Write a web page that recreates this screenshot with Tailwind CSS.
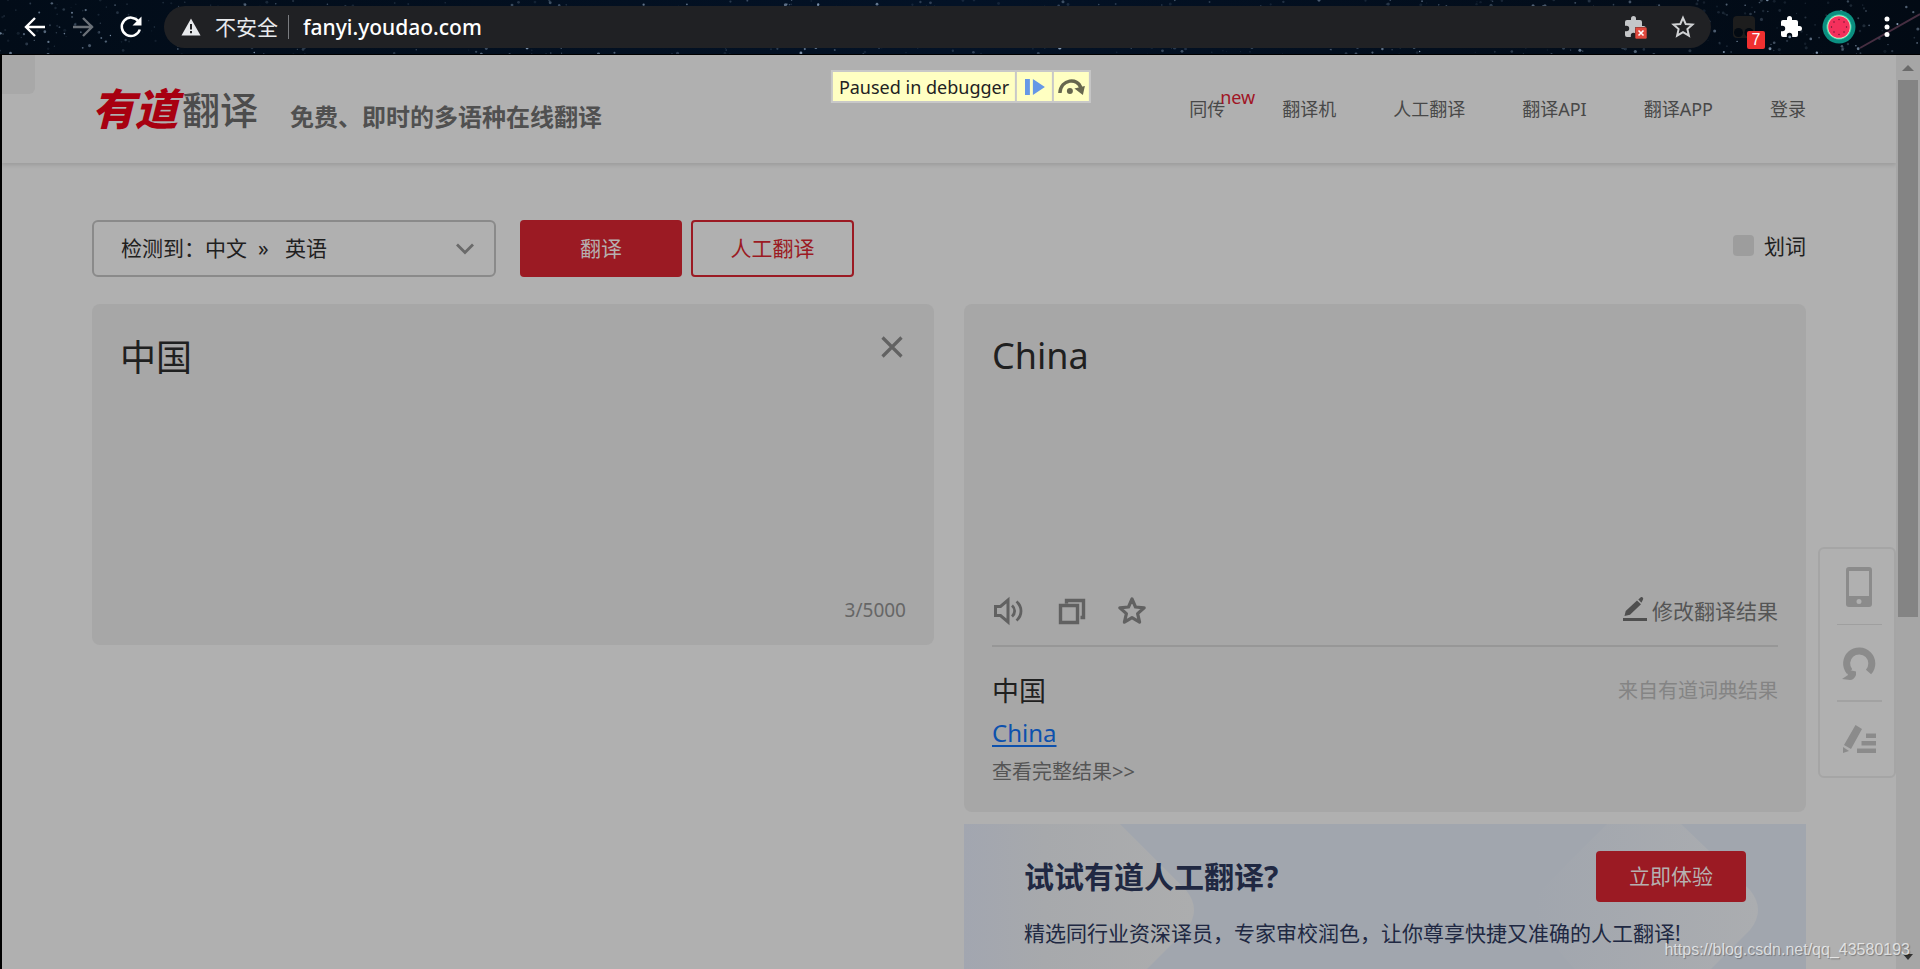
<!DOCTYPE html>
<html lang="zh-CN">
<head>
<meta charset="utf-8">
<title>有道翻译</title>
<script src="https://cdn.jsdelivr.net/npm/@tailwindcss/browser@4"></script>
</head>
<body class="h-screen overflow-hidden flex flex-col bg-black font-['Noto_Sans','Noto_Sans_CJK_SC',sans-serif] text-[#1f2020]">

<!-- Browser toolbar -->
<div class="relative h-[55px] shrink-0 bg-linear-to-r from-[#020c18] via-[#031226] to-[#020a14] border-b border-black">
  <svg id="sky" class="absolute inset-0 w-full h-full" aria-hidden="true"></svg>
  <div class="relative h-full flex items-center pt-[6px] pb-[6px] pl-[23px] pr-[21px]">
    <button aria-label="后退" class="w-6 h-6 text-white"><svg viewBox="0 0 24 24" fill="none" stroke="currentColor" stroke-width="2.4"><path d="M22 12H3.5M12 3l-9 9 9 9"/></svg></button>
    <button aria-label="前进" class="w-6 h-6 ml-6 text-[#6b7178]"><svg viewBox="0 0 24 24" fill="none" stroke="currentColor" stroke-width="2.4"><path d="M2 12h18.500M12 3l9 9-9 9"/></svg></button>
    <button aria-label="重新加载" class="w-6 h-6 ml-6 text-white"><svg viewBox="0 0 24 24"><path d="M19.500 6.500A9.200 9.200 0 1 0 20.800 14.500" fill="none" stroke="currentColor" stroke-width="2.500"/><path d="M22.500 1.500v9h-9z" fill="currentColor"/></svg></button>
    <div class="flex-1 ml-[21px] h-[42px] rounded-full bg-[#202124] flex items-center pl-[17px] pr-4 text-[#e8eaed]">
      <svg class="w-5 h-5" viewBox="0 0 20 20"><path d="M10 1.500L19.500 18.500H.5z" fill="#e8eaed"/><path d="M10 7v5.500M10 14v2.200" stroke="#202124" stroke-width="2"/></svg>
      <span class="ml-[14px] text-[21px] leading-7">不安全</span>
      <span class="w-px h-6 bg-[#7a7c80] ml-[10px]"></span>
      <input id="url" aria-label="地址" type="text" value="fanyi.youdao.com" class="ml-[14px] flex-1 h-8 bg-transparent text-white text-[21px] leading-8 font-medium outline-none">
      <button aria-label="扩展已停用" class="relative w-6 h-6">
        <svg viewBox="0 0 24 24" fill="#c4c6c8"><path d="M20.500 11H19V7a2 2 0 0 0-2-2h-4V3.500a2.500 2.500 0 0 0-5 0V5H4a2 2 0 0 0-2 2v3.800h1.500a2.700 2.700 0 0 1 0 5.400H2V20a2 2 0 0 0 2 2h3.800v-1.500a2.700 2.700 0 0 1 5.400 0V22H17a2 2 0 0 0 2-2v-4h1.500a2.500 2.500 0 0 0 0-5z"/></svg>
        <svg class="absolute left-3 top-3 w-3 h-3" viewBox="0 0 12 12"><rect width="12" height="12" rx="1.500" fill="#e0493e" stroke="#202124" stroke-width=".6"/><path d="M3.500 3.500l5 5m0-5l-5 5" stroke="#fff" stroke-width="1.600"/></svg>
      </button>
      <button aria-label="收藏" class="w-6 h-6 ml-6"><svg viewBox="0 0 24 24" fill="none" stroke="#d0d2d4" stroke-width="2"><path d="M12 2.800l2.700 6.200 6.800.6-5.100 4.500 1.500 6.600-5.900-3.500-5.900 3.500 1.500-6.600L2.500 9.600l6.800-.6z"/></svg></button>
    </div>
    <button aria-label="脚本扩展" class="relative w-8 h-8 ml-[21px]">
      <svg viewBox="0 0 32 32"><rect x="1" y="5" width="22" height="22" rx="4" fill="#1d1d1d"/><circle cx="6.500" cy="21.500" r="4.500" fill="#030a12"/><circle cx="17" cy="21.500" r="4.500" fill="#030a12"/></svg>
      <span class="absolute left-[15px] top-[20px] w-[18px] h-[18px] rounded-xs bg-[#f03030] text-white text-base leading-[18px] text-center font-['Liberation_Sans',sans-serif]">7</span>
    </button>
    <button aria-label="扩展程序" class="w-6 h-6 ml-[15px]"><svg viewBox="0 0 24 24" fill="#fff"><path d="M20.500 11H19V7a2 2 0 0 0-2-2h-4V3.500a2.500 2.500 0 0 0-5 0V5H4a2 2 0 0 0-2 2v3.800h1.500a2.700 2.700 0 0 1 0 5.400H2V20a2 2 0 0 0 2 2h3.800v-1.500a2.700 2.700 0 0 1 5.400 0V22H17a2 2 0 0 0 2-2v-4h1.500a2.500 2.500 0 0 0 0-5z"/></svg></button>
    <button aria-label="用户" class="w-[34px] h-[34px] ml-[19px]"><svg viewBox="0 0 34 34"><circle cx="17" cy="17" r="16.500" fill="#0b8f80"/><circle cx="17" cy="17" r="12.500" fill="#3fdcb0"/><circle cx="17" cy="17" r="11.500" fill="#f7e3c8"/><circle cx="17" cy="17" r="10.800" fill="#f4305c"/><g fill="#5a1530"><circle cx="17" cy="9.500" r=".7"/><circle cx="17" cy="24.500" r=".7"/><circle cx="9.500" cy="17" r=".7"/><circle cx="24.500" cy="17" r=".7"/><circle cx="12" cy="12" r=".7"/><circle cx="22" cy="12" r=".7"/><circle cx="12" cy="22" r=".7"/><circle cx="22" cy="22" r=".7"/></g></svg></button>
    <button aria-label="菜单" class="w-6 h-6 ml-[19px]"><svg viewBox="0 0 24 24" fill="#fff"><circle cx="12" cy="4" r="2.500"/><circle cx="12" cy="12" r="2.500"/><circle cx="12" cy="19.500" r="2.500"/></svg></button>
  </div>
</div>

<!-- Viewport: page and scrollbar -->
<div class="relative flex-1 min-h-0 flex border-l-2 border-black bg-[#b0b0b0]">
  <div class="relative flex-1 min-w-0 overflow-hidden">
    <div class="absolute left-0 top-0 w-[33px] h-[39px] bg-[#a8a8a8] rounded-br-md"></div>

    <header class="relative h-[108px] px-[90px] flex items-center justify-between shadow-[0_2px_4px_rgba(0,0,0,0.12)]">
      <div class="flex items-center">
        <a href="#" class="flex items-center gap-1 leading-[48px]" aria-label="有道翻译"><span class="text-[43px] font-black italic text-[#a80010]">有道</span><span class="text-[38px] font-medium text-[#4c4c4c]">翻译</span></a>
        <p class="ml-8 mt-4 text-2xl font-bold text-[#505050]">免费、即时的多语种在线翻译</p>
      </div>
      <nav class="flex gap-[57px] text-lg leading-6 text-[#484848]">
        <a href="#" class="relative">同传<span class="absolute left-[31px] top-[-12px] text-[#a01525]">new</span></a>
        <a href="#">翻译机</a>
        <a href="#">人工翻译</a>
        <a href="#">翻译API</a>
        <a href="#">翻译APP</a>
        <a href="#">登录</a>
      </nav>
    </header>

    <main class="px-[90px] pt-[57px]">
      <div class="flex items-center">
        <div class="relative w-[404px]">
          <select id="lang" aria-label="语言" class="appearance-none w-full h-[57px] rounded-md border-2 border-[#8a8a8a] bg-transparent pl-[27px] text-[21px]"><option>检测到：中文&nbsp;&nbsp;»&nbsp;&nbsp;&nbsp;英语</option></select>
          <svg class="absolute right-[21px] top-[23px] w-5 h-3 pointer-events-none" viewBox="0 0 20 12" fill="none" stroke="#6a6a6a" stroke-width="2.800"><path d="M2 1.500l8 8 8-8"/></svg>
        </div>
        <button class="ml-6 w-[162px] h-[57px] rounded-sm bg-[#9b1a23] text-[#b6b0b0] text-[21px]">翻译</button>
        <button class="ml-[9px] w-[163px] h-[57px] rounded-sm border-2 border-[#9b1a23] text-[#9b1a23] text-[21px]">人工翻译</button>
        <label class="ml-auto flex items-center gap-[10px] text-[21px] leading-7 pb-[6px]"><input type="checkbox" class="appearance-none w-[21px] h-[21px] rounded-sm bg-[#9d9d9d]">划词</label>
      </div>

      <div class="mt-[27px] grid grid-cols-2 gap-[30px] items-start">
        <section class="h-[341px] rounded-lg bg-[#a7a7a7] pt-[29px] pb-[21px] px-7 flex flex-col">
          <div class="flex flex-1 items-start">
            <textarea id="src" aria-label="原文" class="flex-1 h-full resize-none bg-transparent text-4xl leading-[50px] outline-none">中国</textarea>
            <button aria-label="清空" class="w-7 h-7"><svg viewBox="0 0 28 28" fill="none" stroke="#626262" stroke-width="3.200"><path d="M4.500 4.500l19 19m0-19l-19 19"/></svg></button>
          </div>
          <p class="text-right text-[19px] leading-7 text-[#666]">3/5000</p>
        </section>

        <div>
          <section class="rounded-lg bg-[#a7a7a7] pt-[27px] px-7 pb-6">
            <p class="text-4xl leading-[50px] h-[247px]">China</p>
            <div class="h-[69px] pb-[2px] flex items-center border-b-2 border-[#979797]">
              <button aria-label="朗读" class="w-8 h-8"><svg viewBox="0 0 32 32" fill="none" stroke="#616161" stroke-width="3"><path d="M3.500 11.500h5L16 5v22l-7.500-6.500h-5z"/><path d="M20 10.500c3.500 3 3.500 8 0 11M24.500 6.500c6 5 6 14 0 19" stroke-width="2.800"/></svg></button>
              <button aria-label="复制" class="w-8 h-8 ml-8"><svg viewBox="0 0 32 32" fill="none" stroke="#616161" stroke-width="3.400"><path d="M4.500 10.500h17v17h-17zM10.500 8.500V5.500H27.500V22.500H24.500"/></svg></button>
              <button aria-label="收藏" class="w-8 h-8 ml-7"><svg viewBox="0 0 32 32" fill="none" stroke="#616161" stroke-width="3.200" stroke-linejoin="round"><path d="M16 4l3.500 8 8.700.8-6.600 5.800 2 8.500L16 22.600l-7.600 4.500 2-8.500-6.600-5.800 8.700-.8z"/></svg></button>
              <button class="ml-auto flex items-center gap-[5px] text-[21px] leading-7 text-[#555]"><svg class="w-6 h-6 mb-1" viewBox="0 0 24 24" fill="#4f4f4f"><path d="M0 21h24v3H0zM1.500 19l1.200-5L14 3.500 18 7.300 7 17.800zM15.300 2.400L17.800.3c1.300-.8 3 .9 2.200 2.200l-1.600 3.300z"/></svg>修改翻译结果</button>
            </div>
            <div class="mt-6 flex items-center justify-between">
              <h2 class="text-[27px] leading-10">中国</h2>
              <span class="text-xl text-[#848484]">来自有道词典结果</span>
            </div>
            <p class="mt-[2px] text-2xl leading-10"><a href="#" class="text-[#0d51ad] underline decoration-2 underline-offset-[3px]">China</a></p>
            <p class="mt-[3px] text-xl leading-8"><a href="#" class="text-[#555]">查看完整结果&gt;&gt;</a></p>
          </section>

          <section class="relative mt-3 h-[180px] overflow-hidden bg-[#a1a6ae] text-[#202842]">
            <svg class="absolute left-0 top-0 w-[842px] h-[180px]" viewBox="0 0 842 180" aria-hidden="true">
              <defs>
                <linearGradient id="g1" x1="0" x2="1"><stop offset="0" stop-color="#a2a6b0"/><stop offset=".35" stop-color="#a7a9ac"/><stop offset="1" stop-color="#acadae"/></linearGradient>
                <linearGradient id="g2" x1="0" x2="1"><stop offset="0" stop-color="#a1a6ae"/><stop offset="1" stop-color="#abadb0"/></linearGradient>
              </defs>
              <path d="M0 180V0H156L222 66q16 20 0 40L148 180z" fill="url(#g1)"/>
              <path d="M640 180L577 106q-13-20 0-40L643 0H717L786 66q16 20 0 40L712 180z" fill="url(#g2)"/>
            </svg>
            <div class="relative pl-[60px] pr-[60px] pt-[27px]">
              <div class="flex items-center justify-between">
                <h2 class="text-[30px] leading-10 font-bold">试试有道人工翻译?</h2>
                <button class="w-[150px] h-[51px] rounded-sm bg-[#9b1a23] text-[#b6b0b0] text-[21px]">立即体验</button>
              </div>
              <p class="mt-[15px] text-[21px] leading-8">精选同行业资深译员，专家审校润色，让你尊享快捷又准确的人工翻译!</p>
            </div>
          </section>
        </div>
      </div>
    </main>

    <!-- Floating tools -->
    <aside class="absolute right-0 top-[492px] w-[78px] h-[231px] rounded-md border-2 border-[#a5a5a5] bg-[#b0b0b0] pl-1 flex flex-col items-center">
      <button aria-label="手机版" class="h-[75px]"><svg class="w-[26px] h-10" viewBox="0 0 26 40"><path fill="#8b8b8b" fill-rule="evenodd" d="M3 0h20a3 3 0 0 1 3 3v34a3 3 0 0 1-3 3H3a3 3 0 0 1-3-3V3a3 3 0 0 1 3-3zM3 4v25h20V4zM13 32a2.500 2.500 0 1 0 0 5 2.500 2.500 0 0 0 0-5z"/></svg></button>
      <span class="w-[45px] h-px bg-[#9f9f9f]"></span>
      <button aria-label="反馈" class="h-[75px]"><svg class="w-[34px] h-9" viewBox="0 0 34 36"><path d="M26.500 27A12.600 12.600 0 1 0 7.500 26.500" fill="none" stroke="#8b8b8b" stroke-width="7"/><path d="M0 34L6 30 3 24 14 26.500V30q-2 5-6 5z" fill="#8b8b8b"/></svg></button>
      <span class="w-[45px] h-0.5 bg-[#a2a2a2]"></span>
      <button aria-label="编辑" class="h-[74px]"><svg class="w-[34px] h-7" viewBox="0 0 34 28" fill="#8b8b8b"><path d="M13.500 0l6.500 4L9 24l-7-4zM1 22l6 4-6 2zM24 8.500h10v4.500H24zM19.500 16H34v4.500H19.500zM15 23.500h19V28H15z"/></svg></button>
    </aside>
  </div>

  <!-- Scrollbar -->
  <div class="w-6 shrink-0 bg-[#a6a6a6] flex flex-col items-center px-[2px]" aria-hidden="true">
    <svg class="w-3 h-[25px]" viewBox="0 0 12 25"><path d="M0 16l6-6 6 6z" fill="#6b6b6b"/></svg>
    <div class="w-full h-[537px] bg-[#848484]"></div>
    <svg class="w-3 h-6 mt-auto" viewBox="0 0 12 24"><path d="M1 9h10l-5 6z" fill="#333"/></svg>
  </div>

  <!-- Debugger notice -->
  <div class="absolute left-1/2 -translate-x-1/2 top-[15px] h-[33px] bg-[#c8c8c8] p-[2px] flex gap-[2px] text-lg leading-[31px] text-[#222]">
    <span class="bg-[#ffffc2] h-[29px] px-[6px] whitespace-nowrap">Paused in debugger</span>
    <button aria-label="继续" class="w-[35px] bg-[#ffffc2] flex items-center justify-center"><svg class="w-5 h-4" viewBox="0 0 20 16" fill="#6698e6"><path d="M0 0h5v16H0zM8 0l12 8-12 8z"/></svg></button>
    <button aria-label="单步跳过" class="w-[35px] bg-[#ffffc2] flex items-center justify-center"><svg class="w-[27px] h-4" viewBox="0 0 27 16"><path d="M2 14C3 0 20-2 23 9" fill="none" stroke="#66664e" stroke-width="3.500"/><path d="M16.500 9.500L27 7l-2 9z" fill="#66664e"/><circle cx="12" cy="12" r="3" fill="#66664e"/></svg></button>
  </div>

  <p class="absolute right-[10px] bottom-[9px] text-base leading-5 text-white/70 font-['Liberation_Sans',sans-serif] [text-shadow:1px_1px_1px_rgba(0,0,0,0.3)]">https://blog.csdn.net/qq_43580193</p>
</div>

<script>
  // Scatter faint stars over the toolbar theme
  let seed = 7;
  const rnd = () => (seed = (seed * 16807) % 2147483647) / 2147483647;
  let out = '';
  for (let i = 0; i < 900; i++) {
    const x = rnd() * 1920, y = rnd() * 55, r = 0.5 + rnd() * 1.1, o = 0.1 + rnd() * rnd() * 0.8;
    out += `<circle cx="${x}" cy="${y}" r="${r}" fill="#9fb6d0" opacity="${o}"/>`;
  }
  out += '<path d="M1860 48L1920 14" stroke="#9a5a78" stroke-width="2" opacity=".45"/>';
  document.getElementById('sky').innerHTML = out;
</script>
</body>
</html>
